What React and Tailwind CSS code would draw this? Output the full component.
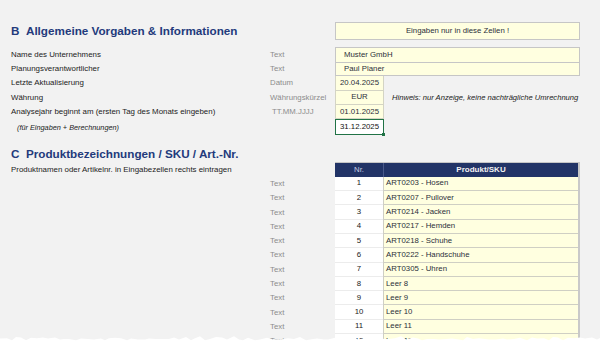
import React from "react";

const products = [
  "ART0203 - Hosen",
  "ART0207 - Pullover",
  "ART0214 - Jacken",
  "ART0217 - Hemden",
  "ART0218 - Schuhe",
  "ART0222 - Handschuhe",
  "ART0305 - Uhren",
  "Leer 8",
  "Leer 9",
  "Leer 10",
  "Leer 11",
  "Leer 12",
];

function InfoRow({ label, type, children, typeIndent, extra }) {
  return (
    <div className="flex h-[14.4px] items-center">
      <div className="w-[259px] text-[7.9px] leading-none text-[#222]">{label}</div>
      <div className={"w-[65px] text-[7.8px] leading-none text-[#8c8c8c] " + (typeIndent ? "pl-[2px]" : "")}>{type}</div>
      {children}
      {extra}
    </div>
  );
}

export default function App() {
  let x = 0;
  const pts = [];
  const seed = [3, 1, 4, 1, 5, 9, 2, 6, 5, 3, 5, 8, 9, 7, 9, 3, 2, 3, 8, 4, 6, 2, 6, 4, 3, 3, 8, 3, 2, 7, 9, 5];
  let i = 0;
  while (x <= 600) {
    const s = seed[i % seed.length];
    pts.push(`${x},${337.5 + (s % 5) * 0.7 - (i % 3 === 0 ? 1.2 : 0)}`);
    x += 4 + (s % 4);
    i++;
  }
  const poly = `0,345 ${pts.join(" ")} 600,338 600,345`;

  return (
    <div
      className="relative w-[600px] h-[345px] overflow-hidden bg-[#f2f2f2] pl-[11px] pt-[22px]"
      style={{ fontFamily: '"Liberation Sans", Arial, sans-serif' }}
    >
      {/* Section B title */}
      <div className="flex h-[18.4px] items-center">
        <div className="w-[324px] text-[11.7px] font-bold leading-none text-[#233a7c]">
          B&nbsp;&nbsp;Allgemeine Vorgaben &amp; Informationen
        </div>
        <div className="flex h-full w-[245px] items-center justify-center border border-[#c6c6c6] bg-[#ffffe0] text-[7.8px] leading-none text-[#2b2f3a]">
          Eingaben nur in diese Zellen !
        </div>
      </div>

      <div className="mt-[7px]">
        <InfoRow label="Name des Unternehmens" type="Text">
          <div className="flex h-full w-[245px] items-center border border-b-0 border-[#c6c6c6] bg-[#ffffe0] pl-[8px] text-[7.8px] leading-none text-[#2b2f3a]">
            Muster GmbH
          </div>
        </InfoRow>
        <InfoRow label="Planungsverantwortlicher" type="Text">
          <div className="flex h-full w-[245px] items-center border border-[#c6c6c6] bg-[#ffffe0] pl-[8px] text-[7.8px] leading-none text-[#2b2f3a]">
            Paul Planer
          </div>
        </InfoRow>
        <InfoRow label="Letzte Aktualisierung" type="Datum">
          <div className="flex h-full w-[49px] items-center justify-center border-x border-b border-[#d4d4c4] bg-[#ffffe0] text-[7.8px] leading-none text-[#2b2f3a]">
            20.04.2025
          </div>
        </InfoRow>
        <InfoRow
          label="Währung"
          type="Währungskürzel"
          extra={
            <div className="pl-[8px] text-[7.6px] italic leading-none text-[#222]">
              Hinweis: nur Anzeige, keine nachträgliche Umrechnung
            </div>
          }
        >
          <div className="flex h-full w-[49px] items-center justify-center border-x border-b border-[#d4d4c4] bg-[#ffffe0] text-[7.8px] leading-none text-[#2b2f3a]">
            EUR
          </div>
        </InfoRow>
        <InfoRow label="Analysejahr beginnt am (ersten Tag des Monats eingeben)" type="TT.MM.JJJJ" typeIndent>
          <div className="flex h-full w-[49px] items-center justify-center border-x border-b border-[#d4d4c4] bg-[#ffffe0] text-[7.8px] leading-none text-[#2b2f3a]">
            01.01.2025
          </div>
        </InfoRow>
        <div className="flex h-[16px] items-center">
          <div className="w-[324px] pl-[6px] text-[7.3px] italic leading-none text-[#222]">
            (für Eingaben + Berechnungen)
          </div>
          <div className="relative flex h-full w-[49px] items-center justify-center border border-[#217346] bg-white text-[7.8px] leading-none text-[#111]">
            31.12.2025
            <div className="absolute -bottom-[2px] -right-[2px] h-[3px] w-[3px] bg-[#217346]" />
          </div>
        </div>
      </div>

      {/* Section C */}
      <div className="mt-[11px] flex h-[16px] items-center">
        <div className="text-[11.7px] font-bold leading-none text-[#233a7c]">
          C&nbsp;&nbsp;Produktbezeichnungen / SKU / Art.-Nr.
        </div>
      </div>
      <div className="flex h-[14.4px] items-center">
        <div className="w-[324px] pt-[1px] text-[7.9px] leading-none text-[#222]">
          Produktnamen oder Artikelnr. in Eingabezellen rechts eintragen
        </div>
        <div className="flex h-full w-[245px] border-r-2 border-t border-[#c6c6c6] bg-[#223467]">
          <div className="flex w-[48px] items-center justify-center text-[7.8px] leading-none text-[#c9cfe3]">Nr.</div>
          <div className="flex flex-1 items-center justify-center border-l border-[#4a5a8a] text-[8px] font-bold leading-none text-[#f3f3f3]">
            Produkt/SKU
          </div>
        </div>
      </div>
      {products.map((p, idx) => (
        <div key={idx} className="flex h-[14.3px] items-center">
          <div className="w-[259px]" />
          <div className="w-[65px] text-[7.8px] leading-none text-[#8c8c8c]">Text</div>
          <div className="flex h-full w-[245px] border-r-2 border-[#c9c9c9]">
            <div className="flex w-[48px] items-center justify-center border-b border-[#ececec] bg-white text-[7.8px] leading-none text-[#1a1a1a]">
              {idx + 1}
            </div>
            <div className="flex flex-1 items-center border-b border-l border-[#cfcfc4] bg-[#ffffe0] pl-[2px] text-[7.8px] leading-none text-[#2b2f3a]">
              {p}
            </div>
          </div>
        </div>
      ))}

      {/* torn paper edge */}
      <svg className="absolute bottom-0 left-0" width="600" height="345" viewBox="0 0 600 345" style={{ pointerEvents: "none" }}>
        <polygon points={poly} fill="#ffffff" />
      </svg>
    </div>
  );
}
